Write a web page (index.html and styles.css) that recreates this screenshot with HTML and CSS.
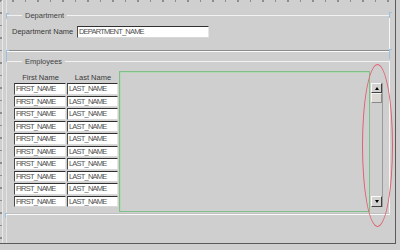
FILE: index.html
```html
<!DOCTYPE html>
<html lang="en">

<head>
    <meta charset="UTF-8">
    <title>Department form</title>
    <link rel="stylesheet" href="styles.css">
</head>

<body>
    <div class="canvas">
        <div class="group dept">
            <span class="legend">Department</span>
            <div class="field">
                <label>Department Name</label>
                <div class="input">DEPARTMENT_NAME</div>
            </div>
        </div>

        <div class="group emp">
            <span class="legend">Employees</span>
            <div class="emp-body">
                <div class="table">
                    <div class="head">First Name</div>
                    <div class="head">Last Name</div>
                    <div class="input">FIRST_NAME</div><div class="input">LAST_NAME</div>
                    <div class="input">FIRST_NAME</div><div class="input">LAST_NAME</div>
                    <div class="input">FIRST_NAME</div><div class="input">LAST_NAME</div>
                    <div class="input">FIRST_NAME</div><div class="input">LAST_NAME</div>
                    <div class="input">FIRST_NAME</div><div class="input">LAST_NAME</div>
                    <div class="input">FIRST_NAME</div><div class="input">LAST_NAME</div>
                    <div class="input">FIRST_NAME</div><div class="input">LAST_NAME</div>
                    <div class="input">FIRST_NAME</div><div class="input">LAST_NAME</div>
                    <div class="input">FIRST_NAME</div><div class="input">LAST_NAME</div>
                    <div class="input">FIRST_NAME</div><div class="input">LAST_NAME</div>
                </div>
                <div class="stack"></div>
                <div class="scroll">
                    <div class="btn"><span class="up"></span></div>
                    <div class="thumb"></div>
                    <div class="track"></div>
                    <div class="btn"><span class="down"></span></div>
                </div>
            </div>
        </div>

        <!-- selection handles -->
        <i class="handle h1"></i>
        <i class="handle h2"></i>
        <i class="handle h3"></i>
        <i class="handle h4"></i>
        <i class="handle h5"></i>

        <div class="ring"></div>
    </div>
</body>

</html>
```

FILE: styles.css
```css
html,
body {
    margin: 0;
    padding: 0;
}

body {
    background: #cfcfcf;
    font: 7.5px/10px "Liberation Sans", Arial, sans-serif;
    color: #3a3a3a;
}

.canvas {
    position: relative;
    width: 395px;
    height: 243px;
    border-right: 1px solid #5a5a5a;
    border-bottom: 1px solid #5a5a5a;
    background:
        repeating-linear-gradient(90deg, #8c8c8c 0 1px, transparent 1px 12.5px) 0 0 / 100% 2px no-repeat,
        repeating-linear-gradient(180deg, #8c8c8c 0 1px, transparent 1px 12.5px) 0 0 / 2px 100% no-repeat,
        linear-gradient(#e8e8e8, #e8e8e8) 2px 0 / 1px 100% no-repeat,
        linear-gradient(#e4e4e4, #e4e4e4) 6px 0 / 1px 100% no-repeat,
        #cfcfcf;
    overflow: hidden;
}

/* group boxes */
.group {
    box-sizing: border-box;
    margin-left: 6px;
    width: 384px;
    border-top: 1px solid #f2f2f2;
    border-right: 1px solid #f6f6f6;
    border-left: 1px solid #e4e4e4;
    border-bottom: 1px solid #8c8c8c;
    box-shadow: 0 1px 0 #fafafa;
}

.dept {
    margin-top: 15px;
    height: 36px;
}

.emp {
    margin-top: 10px;
    height: 153px;
    border-bottom-color: #c0c0c0;
}

.legend {
    display: block;
    width: max-content;
    margin: -5px 0 -5px 15px;
    padding: 0 3px;
    background: #cfcfcf;
    color: #444;
    line-height: 10px;
}

.field {
    display: grid;
    grid-template-columns: 65px 132px;
    align-items: center;
    margin-top: 10px;
    padding-left: 5px;
}

.input {
    box-sizing: border-box;
    height: 12px;
    padding-left: 1px;
    background: #fff;
    border-top: 1px solid #303030;
    border-left: 1px solid #4a4a4a;
    border-right: 1px solid #e6e6e6;
    border-bottom: 1px solid #d8d8d8;
    color: #505050;
    letter-spacing: -0.8px;
    line-height: 10px;
    white-space: nowrap;
    overflow: hidden;
}

/* employees */
.emp-body {
    display: flex;
    align-items: flex-start;
    padding-left: 7px;
}

.table {
    display: grid;
    grid-template-columns: 53px 52px;
    grid-template-rows: 10px;
    grid-auto-rows: 12.5px;
    margin-top: 11px;
    width: 105px;
}

.table .input {
    height: 11.5px;
    margin-right: 1px;
}

.head {
    text-align: center;
    line-height: 10px;
}

.stack {
    box-sizing: border-box;
    width: 251px;
    height: 141px;
    margin-top: 9px;
    border: 1px solid #80c088;
    box-shadow: inset 1px 1px 0 #b4d8b6;
}

.scroll {
    box-sizing: border-box;
    display: flex;
    flex-direction: column;
    width: 13px;
    height: 124px;
    margin-top: 21px;
    padding-left: 1px;
    border-right: 1px solid #9a9a9a;
}

.btn,
.thumb {
    box-sizing: border-box;
    height: 10px;
    background: #d4d2d0;
    border: 1px solid;
    border-color: #fafafa #404040 #404040 #fafafa;
    display: flex;
    align-items: center;
    justify-content: center;
}

.thumb {
    background: #dcd8d4;
    border-color: #f4f4f4 #8a8a8a #8a8a8a #f4f4f4;
}

.track {
    flex: 1;
}

.btn:last-child {
    height: 11px;
}

.up {
    border-left: 2.5px solid transparent;
    border-right: 2.5px solid transparent;
    border-bottom: 3px solid #000;
}

.down {
    border-left: 2.5px solid transparent;
    border-right: 2.5px solid transparent;
    border-top: 3px solid #000;
}

/* overlays */
.handle {
    position: absolute;
    width: 2px;
    border-left: 1px solid #9cc0e0;
    border-top: 1px solid #9cc0e0;
}

.h1 { left: 6px; top: 13px; height: 5px; }
.h2 { left: 6px; top: 50px; height: 11px; }
.h3 { left: 5px; top: 213px; height: 4px; }
.h4 { left: 389px; top: 12px; height: 5px; }
.h5 { left: 389px; top: 49px; height: 9px; }

.ring {
    position: absolute;
    left: 362px;
    top: 64px;
    width: 29px;
    height: 161px;
    border: 1px solid #e0606e;
    border-radius: 50%;
}
```
